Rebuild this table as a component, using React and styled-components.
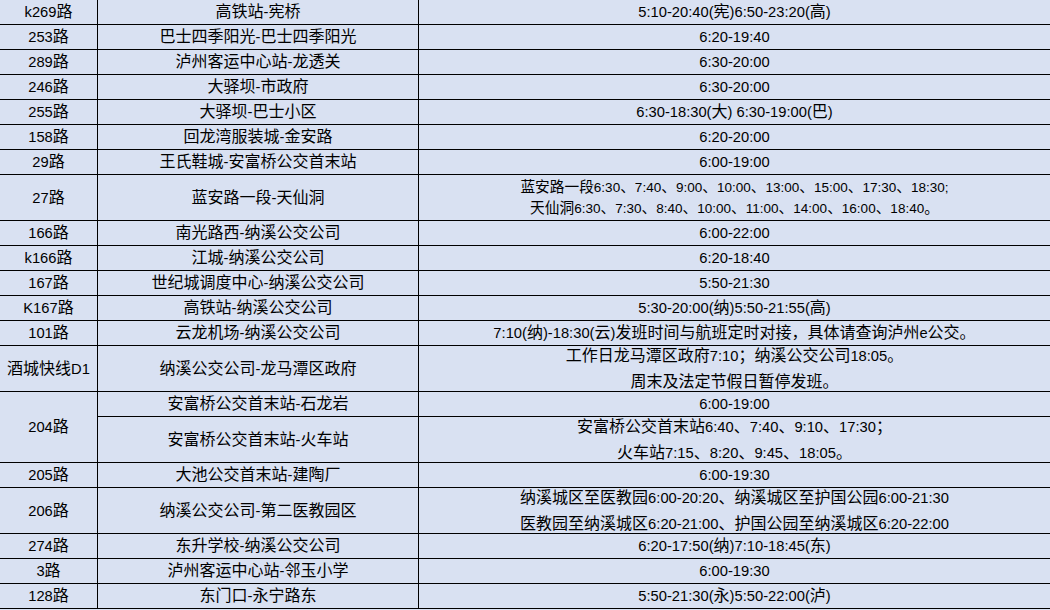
import React from 'react';
import styled, { createGlobalStyle } from 'styled-components';

const rows = [
    { no: 'k269路', line: '高铁站-宪桥', time: ['5:10-20:40(宪)6:50-23:20(高)'] },
    { no: '253路', line: '巴士四季阳光-巴士四季阳光', time: ['6:20-19:40'] },
    { no: '289路', line: '泸州客运中心站-龙透关', time: ['6:30-20:00'] },
    { no: '246路', line: '大驿坝-市政府', time: ['6:30-20:00'] },
    { no: '255路', line: '大驿坝-巴士小区', time: ['6:30-18:30(大) 6:30-19:00(巴)'] },
    { no: '158路', line: '回龙湾服装城-金安路', time: ['6:20-20:00'] },
    { no: '29路', line: '王氏鞋城-安富桥公交首末站', time: ['6:00-19:00'] },
    {
        no: '27路', line: '蓝安路一段-天仙洞', small: true,
        time: [
            '蓝安路一段6:30、7:40、9:00、10:00、13:00、15:00、17:30、18:30;',
            '天仙洞6:30、7:30、8:40、10:00、11:00、14:00、16:00、18:40。',
        ],
    },
    { no: '166路', line: '南光路西-纳溪公交公司', time: ['6:00-22:00'] },
    { no: 'k166路', line: '江城-纳溪公交公司', time: ['6:20-18:40'] },
    { no: '167路', line: '世纪城调度中心-纳溪公交公司', time: ['5:50-21:30'] },
    { no: 'K167路', line: '高铁站-纳溪公交公司', time: ['5:30-20:00(纳)5:50-21:55(高)'] },
    { no: '101路', line: '云龙机场-纳溪公交公司', time: ['7:10(纳)-18:30(云)发班时间与航班定时对接，具体请查询泸州e公交。'] },
    {
        no: '酒城快线D1', line: '纳溪公交公司-龙马潭区政府',
        time: ['工作日龙马潭区政府7:10；纳溪公交公司18:05。', '周末及法定节假日暂停发班。'],
    },
    { no: '204路', span: 2, line: '安富桥公交首末站-石龙岩', time: ['6:00-19:00'] },
    {
        line: '安富桥公交首末站-火车站',
        time: ['安富桥公交首末站6:40、7:40、9:10、17:30；', '火车站7:15、8:20、9:45、18:05。'],
    },
    { no: '205路', line: '大池公交首末站-建陶厂', time: ['6:00-19:30'] },
    {
        no: '206路', line: '纳溪公交公司-第二医教园区',
        time: [
            '纳溪城区至医教园6:00-20:20、纳溪城区至护国公园6:00-21:30',
            '医教园至纳溪城区6:20-21:00、护国公园至纳溪城区6:20-22:00',
        ],
    },
    { no: '274路', line: '东升学校-纳溪公交公司', time: ['6:20-17:50(纳)7:10-18:45(东)'] },
    { no: '3路', line: '泸州客运中心站-邻玉小学', time: ['6:00-19:30'] },
    { no: '128路', line: '东门口-永宁路东', time: ['5:50-21:30(永)5:50-22:00(泸)'] },
];

// latin runs get a slightly smaller size, like Calibri next to the CJK font
const Mixed = ({ text }) =>
    text.split(/([\x20-\x7E]+)/).map((part, i) =>
        /^[\x20-\x7E]+$/.test(part) ? <Latin key={i}>{part}</Latin> : part
    );

const App = () => {
    return (
        <>
            <Page />
            <Sheet>
                <colgroup>
                    <Col $w={98} />
                    <Col $w={321} />
                    <Col $w={632} />
                </colgroup>
                <tbody>
                    {rows.map((r, i) => {
                        const tall = r.time.length > 1;
                        return (
                            <tr key={i}>
                                {r.no && (
                                    <Cell rowSpan={r.span || 1} $tall={tall}>
                                        <Mixed text={r.no} />
                                    </Cell>
                                )}
                                <Cell $tall={tall}>
                                    <Mixed text={r.line} />
                                </Cell>
                                <Cell $tall={tall}>
                                    {tall ? (
                                        <Lines $small={r.small}>
                                            {r.time.map((t, j) => (
                                                <div key={j}><Mixed text={t} /></div>
                                            ))}
                                        </Lines>
                                    ) : (
                                        <Mixed text={r.time[0]} />
                                    )}
                                </Cell>
                            </tr>
                        );
                    })}
                </tbody>
            </Sheet>
        </>
    );
};

const Page = createGlobalStyle`
    html, body {
        margin: 0;
        background: #d9e1f2;
        overflow: hidden;
    }
`;

const Sheet = styled.table`
    border-collapse: separate;
    border-spacing: 0;
    table-layout: fixed;
    width: 1051px;
    background: #d9e1f2;
    color: #000;
    font-family: "Liberation Sans", "Noto Sans CJK SC", sans-serif;
    font-size: 16px;
`;

const Col = styled.col`
    width: ${p => p.$w}px;
`;

const Cell = styled.td`
    box-sizing: content-box;
    padding: 0;
    height: ${p => (p.$tall ? 45 : 24)}px;
    line-height: 24px;
    border-right: 1px solid #000;
    border-bottom: 1px solid #000;
    text-align: center;
    vertical-align: middle;
    white-space: nowrap;
    overflow: visible;
`;

const Lines = styled.div`
    height: 45px;
    display: flex;
    flex-direction: column;
    justify-content: center;
    align-items: center;
    font-size: ${p => (p.$small ? '14.7px' : '16px')};
    line-height: ${p => (p.$small ? 21 : 25)}px;
`;

const Latin = styled.span`
    font-size: 0.92em;
`;

export default App;
